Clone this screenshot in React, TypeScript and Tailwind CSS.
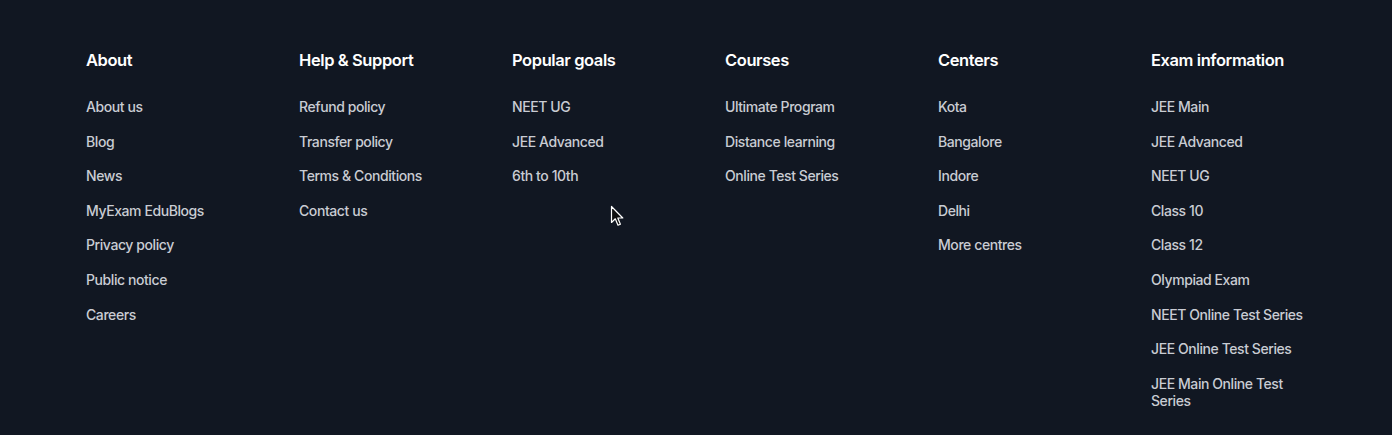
import React from "react";

const columns: { title: string; links: string[] }[] = [
  {
    title: "About",
    links: ["About us", "Blog", "News", "MyExam EduBlogs", "Privacy policy", "Public notice", "Careers"],
  },
  {
    title: "Help & Support",
    links: ["Refund policy", "Transfer policy", "Terms & Conditions", "Contact us"],
  },
  { title: "Popular goals", links: ["NEET UG", "JEE Advanced", "6th to 10th"] },
  { title: "Courses", links: ["Ultimate Program", "Distance learning", "Online Test Series"] },
  { title: "Centers", links: ["Kota", "Bangalore", "Indore", "Delhi", "More centres"] },
  {
    title: "Exam information",
    links: [
      "JEE Main",
      "JEE Advanced",
      "NEET UG",
      "Class 10",
      "Class 12",
      "Olympiad Exam",
      "NEET Online Test Series",
      "JEE Online Test Series",
      "JEE Main Online Test Series",
    ],
  },
];

export default function App() {
  return (
    <div
      className="relative w-full min-h-[435px] bg-[#111722] pl-[86px] pt-[50px] pb-[26px]"
      style={{ fontFamily: "Inter, 'Noto Sans', sans-serif" }}
    >
      <div className="grid grid-cols-[repeat(6,213px)]">
        {columns.map((c) => (
          <div key={c.title} className="flex flex-col">
            <h3 className="text-[16.5px] leading-[20px] font-semibold text-white tracking-[-0.025em]">{c.title}</h3>
            <ul className="mt-[28px] flex flex-col gap-[17.6px] max-w-[165px]">
              {c.links.map((l) => (
                <li key={l} className="text-[14px] leading-[17px] font-medium text-[#c9ccd3] tracking-[-0.03em]">
                  {l}
                </li>
              ))}
            </ul>
          </div>
        ))}
      </div>
      <svg
        className="absolute left-[610px] top-[205px]"
        width="16"
        height="24"
        viewBox="0 0 16 24"
      >
        <path
          d="M1.5 1.5 L1.5 17.5 L5.3 13.8 L8 20.2 L10.4 19.2 L7.8 13 L12.8 13 Z"
          fill="#111"
          stroke="#fff"
          strokeWidth="1.2"
          strokeLinejoin="round"
        />
      </svg>
    </div>
  );
}
